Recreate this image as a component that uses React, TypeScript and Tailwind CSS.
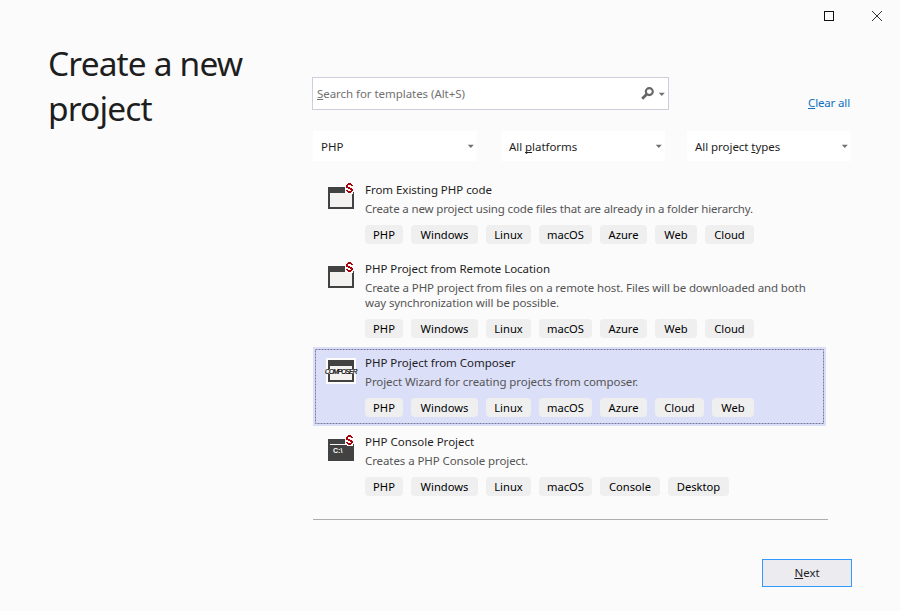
import type { ReactNode } from "react";

const chipWidths: Record<string, string> = {
  PHP: "w-[38px]",
  Windows: "w-[67px]",
  Linux: "w-[45px]",
  macOS: "w-[53px]",
  Azure: "w-[47px]",
  Web: "w-[42px]",
  Cloud: "w-[49px]",
  Console: "w-[60px]",
  Desktop: "w-[61px]",
};

type Kind = "window" | "composer" | "console";

const badgePath =
  "M20 -3.5h3M19 -2.5h5M18 -1.5h2M23 -1.5h2M18 -0.5h2M18 0.5h4M20 1.5h4M22 2.5h3M23 3.5h2M18 3.5h2M19 4.5h5M20 5.5h3";

function Badge() {
  return (
    <>
      <path d="M19 -5h5v1h2v9h-1v2h-6v-1h-2v-10h2z" fill="#fcfcfc" />
      <path d={badgePath} stroke="#a80008" />
    </>
  );
}

function TemplateIcon({ kind }: { kind: Kind }) {
  return (
    <div className="relative h-[22px] w-[26px]">
      {kind === "composer" && <div className="absolute -left-[2px] -top-[2px] h-[26px] w-[30px] bg-[#fcfcfc]" />}
      <svg className="absolute inset-0 overflow-visible" width="26" height="22" viewBox="0 0 26 22">
        <path d="M0 0h26v22H0z" fill="#424242" />
        {kind !== "console" && <path d="M2 6h22v14H2z" fill="#f3f2f1" />}
        {kind === "console" && <path d="M2 5h17v1H2z" fill="#f6f6f6" />}
        {kind === "composer" && <path d="M-1 9h28v5H-1z" fill="#f6f6f6" />}
        {kind !== "composer" && <Badge />}
      </svg>
      {kind === "console" && (
        <span className="absolute left-[5px] top-[8px] font-['Liberation_Sans',sans-serif] text-[7px] font-bold leading-[8px] text-white">
          C:\
        </span>
      )}
      {kind === "composer" && (
        <span className="absolute -left-[3px] top-[8px] w-8 whitespace-nowrap font-['Liberation_Sans',sans-serif] text-[6.5px] italic leading-[8px] tracking-[-0.8px] text-black [-webkit-text-stroke:0.2px_black]">
          COMPOSER
        </span>
      )}
    </div>
  );
}

interface Template {
  title: string;
  titleTrack: string;
  lines: [string, string][];
  tags: string[];
  kind: Kind;
  selected?: boolean;
}

const base = ["PHP", "Windows", "Linux", "macOS", "Azure"];
const templates: Template[] = [
  {
    title: "From Existing PHP code",
    titleTrack: "tracking-[-0.04px]",
    lines: [["Create a new project using code files that are already in a folder hierarchy.", "tracking-[-0.15px]"]],
    tags: [...base, "Web", "Cloud"],
    kind: "window",
  },
  {
    title: "PHP Project from Remote Location",
    titleTrack: "tracking-[-0.04px]",
    lines: [
      ["Create a PHP project from files on a remote host. Files will be downloaded and both", "tracking-[-0.11px]"],
      ["way synchronization will be possible.", "tracking-[-0.11px]"],
    ],
    tags: [...base, "Web", "Cloud"],
    kind: "window",
  },
  {
    title: "PHP Project from Composer",
    titleTrack: "tracking-[-0.02px]",
    lines: [["Project Wizard for creating projects from composer.", "tracking-[-0.08px]"]],
    tags: [...base, "Cloud", "Web"],
    kind: "composer",
    selected: true,
  },
  {
    title: "PHP Console Project",
    titleTrack: "tracking-normal",
    lines: [["Creates a PHP Console project.", "tracking-[-0.09px]"]],
    tags: ["PHP", "Windows", "Linux", "macOS", "Console", "Desktop"],
    kind: "console",
  },
];

function TemplateRow({ item }: { item: Template }) {
  return (
    <li className={`relative flex w-[513px] pb-[9px] ${item.selected ? "bg-[#dbdff8]" : ""}`}>
      {item.selected && (
        <svg className="absolute inset-0" width="513" height="79">
          <rect x="2.5" y="2.5" width="508" height="74" fill="none" stroke="#74789a" strokeDasharray="2 1" />
        </svg>
      )}
      <div className="w-[52px] shrink-0 pl-[15px] pt-[13px]">
        <TemplateIcon kind={item.kind} />
      </div>
      <div className="relative pt-2">
        <div className={`h-[15px] whitespace-nowrap leading-[15px] text-[#1e1e1e] ${item.titleTrack}`}>{item.title}</div>
        <div className="mt-1 text-[#555]">
          {item.lines.map(([text, track]) => (
            <div key={text} className={`h-[15px] whitespace-nowrap leading-[15px] ${track}`}>
              {text}
            </div>
          ))}
        </div>
        <div className="mt-[9px] flex gap-2">
          {item.tags.map((tag) => (
            <span
              key={tag}
              className={`flex h-[19px] items-center justify-center rounded-[4px] bg-[#efeff0] text-[11.2px] leading-[19px] text-black ${chipWidths[tag]}`}
            >
              {tag}
            </span>
          ))}
        </div>
      </div>
    </li>
  );
}

function Caret() {
  return (
    <svg className="overflow-visible" width="7" height="4" viewBox="0 0 7 4">
      <path d="M0.8 0.8h6L3.8 4z" fill="#717171" />
    </svg>
  );
}

function Filter({ width, children }: { width: string; children: ReactNode }) {
  return (
    <div className={`flex h-[30px] items-center justify-between bg-white pl-2 pr-[3px] tracking-[-0.05px] text-[#1e1e1e] ${width}`}>
      <span className="pt-px">{children}</span>
      <Caret />
    </div>
  );
}

function Key({ children }: { children: string }) {
  return (
    <span className="underline decoration-1 underline-offset-[1px] [text-decoration-skip-ink:none]">{children}</span>
  );
}

export default function App() {
  return (
    <div className="flex h-[611px] w-[900px] flex-col overflow-hidden bg-[#fbfbfb] font-['Noto_Sans',sans-serif] text-[11.5px] leading-[15px]">
      <header className="flex h-8 shrink-0 items-center justify-end gap-9 pr-[17px]">
        <svg width="12" height="12" viewBox="0 0 12 12">
          <rect x="1.5" y="1.5" width="9" height="9" fill="none" stroke="#111" />
        </svg>
        <svg width="12" height="12" viewBox="0 0 12 12">
          <path d="M1 1l10 10M11 1L1 11" stroke="#333" />
        </svg>
      </header>
      <div className="flex">
        <h1 className="w-[312px] shrink-0 pl-12 pt-[9px] text-[33.5px] leading-[45px] tracking-[-0.85px] text-[#1e1e1e]">
          Create a new
          <br />
          project
        </h1>
        <main className="flex w-[541px] flex-col pt-[45px]">
          <div className="flex h-[33px] justify-between">
            <div className="flex w-[357px] items-center border border-[#cccedb] bg-white pl-1 pr-[3px] tracking-[-0.05px] text-[#717171]">
              <span className="grow">
                <Key>S</Key>earch for templates (Alt+S)
              </span>
              <svg className="mr-1" width="13" height="13" viewBox="0 0 13 13">
                <circle cx="8.3" cy="4.6" r="3.5" fill="none" stroke="#666" strokeWidth="2.1" />
                <path d="M5.7 7.2L1.2 11.7" stroke="#666" strokeWidth="2.8" />
              </svg>
              <Caret />
            </div>
            <a className="mr-[3px] self-end leading-[15px] tracking-[-0.15px] text-[#0e70c0]">
              <Key>C</Key>lear all
            </a>
          </div>
          <div className="mt-[21px] flex pl-px">
            <Filter width="w-[164px]">PHP</Filter>
            <div className="w-6" />
            <Filter width="w-[164px]">
              All <Key>p</Key>latforms
            </Filter>
            <div className="w-[22px]" />
            <Filter width="w-[164px]">
              All project <Key>t</Key>ypes
            </Filter>
          </div>
          <div className="ml-px mt-[13px] h-[346px] w-[515px] border-b border-[#adadad]">
            <ul>
              {templates.map((item) => (
                <TemplateRow key={item.title} item={item} />
              ))}
            </ul>
          </div>
          <button className="mr-px mt-[39px] flex h-7 w-[90px] items-center justify-center self-end border border-[#3399ff] bg-[#ececf0] pb-px text-[#1e1e1e]">
            <span>
              <Key>N</Key>ext
            </span>
          </button>
        </main>
      </div>
    </div>
  );
}
